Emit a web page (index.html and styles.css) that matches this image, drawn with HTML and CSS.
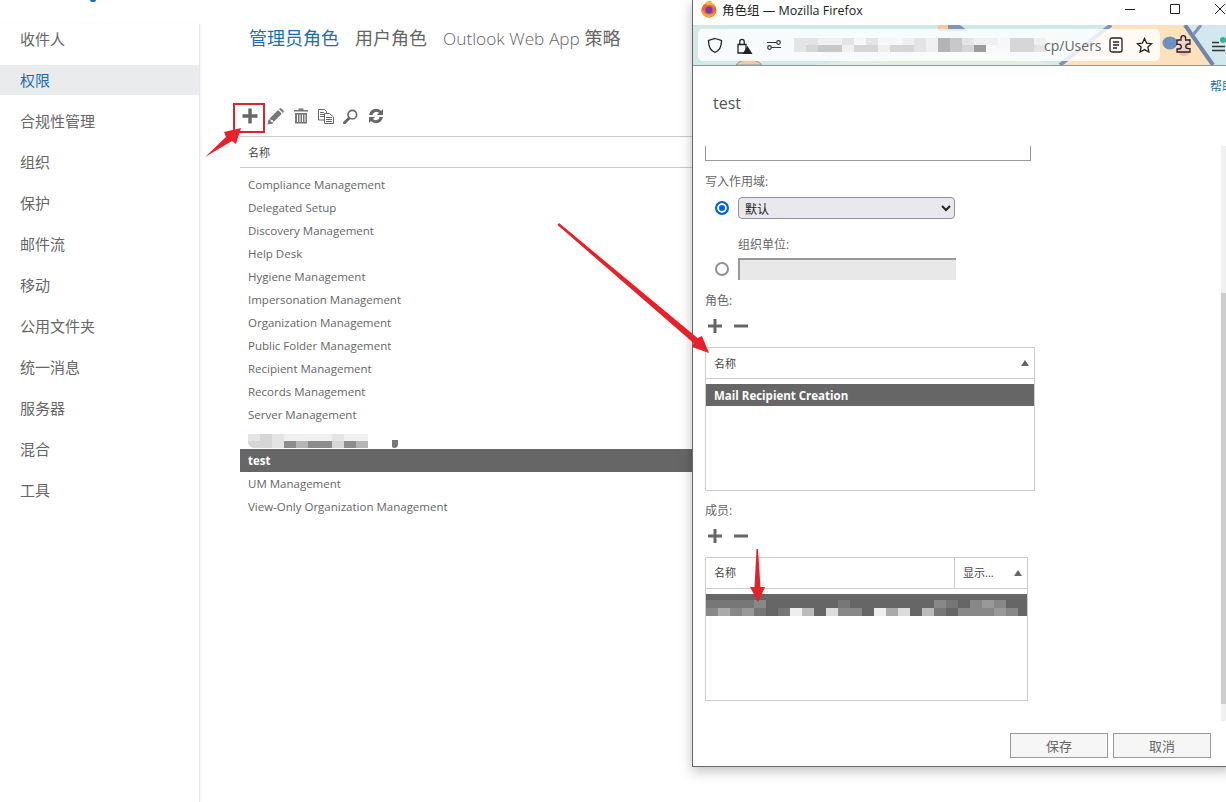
FILE: index.html
```html
<!DOCTYPE html>
<html lang="zh-CN">
<head>
  <meta charset="UTF-8">
  <title>角色组</title>
  <link rel="stylesheet" href="styles.css">
</head>
<body>
<div class="logo-tail"></div>

<div class="page">
  <nav class="sidebar">
    <a>收件人</a>
    <a class="active">权限</a>
    <a>合规性管理</a>
    <a>组织</a>
    <a>保护</a>
    <a>邮件流</a>
    <a>移动</a>
    <a>公用文件夹</a>
    <a>统一消息</a>
    <a>服务器</a>
    <a>混合</a>
    <a>工具</a>
  </nav>

  <main class="content">
    <div class="tabs">
      <span class="tab current">管理员角色</span>
      <span class="tab">用户角色</span>
      <span class="tab"><span class="tab-latin">Outlook Web App</span> 策略</span>
    </div>

    <div class="toolbar">
      <span class="tool tool-add">
        <svg width="16" height="16" viewBox="0 0 16 16"><path d="M6.300 .5h3.400v5.800h5.800v3.400H9.700v5.800H6.300V9.700H.5V6.300h5.800z" fill="#666"/></svg>
      </span>
      <span class="tool">
        <svg width="17" height="17" viewBox="0 0 17 17" fill="#777"><path d="M.5 16.500l1-5 2 .2.300 2 2 .4.200 1.300zM2.500 10.500L11 2l3.800 3.800-8.500 8.500-.3-2-2-.4z"/><path d="M12 1l1-.7c.5-.2 1-.1 1.400.2l2 2c.4.400.5 1 .2 1.500l-.7 1z"/></svg>
      </span>
      <span class="tool">
        <svg width="14" height="16" viewBox="0 0 14 16"><path d="M4.500 .5h5v1.500h4.500v1.500H0V2h4.500zM1 5h12v10.500H1zM3 6.500v7.500h1V6.500zM5.500 6.500v7.500h1V6.500zM8 6.500v7.500h1V6.500zM10.500 6.500v7.500h1V6.500z" fill="#777" fill-rule="evenodd"/></svg>
      </span>
      <span class="tool">
        <svg width="16" height="15" viewBox="0 0 16 15" fill="none" stroke="#666"><path d="M.5 .5h6l2 2v8.500h-8zM2 3.500h4M2 5.500h4M2 7.500h4"/><path d="M6.500 4.500h5l4 3.500v6.500h-9z" fill="#fff"/><path d="M8 8.500h6M8 10.500h6M8 12.500h6"/></svg>
      </span>
      <span class="tool">
        <svg width="15" height="15" viewBox="0 0 15 15" fill="none" stroke="#666"><circle cx="9.300" cy="5.700" r="4.300" stroke-width="1.600"/><path d="M6 9.200L1.500 13.700" stroke-width="2.800" stroke-linecap="round"/></svg>
      </span>
      <span class="tool">
        <svg width="16" height="16" viewBox="0 0 16 16" fill="#666"><path d="M8 .8a7 7 0 0 1 5 2.100L15 1v6H9l2-2a3.800 3.800 0 0 0-6.600 2H1.100A7 7 0 0 1 8 .8z"/><path d="M8 15.200a7 7 0 0 1-5-2.100L1 15V9h6l-2 2a3.800 3.800 0 0 0 6.600-2h3.300A7 7 0 0 1 8 15.200z"/></svg>
      </span>
    </div>

    <div class="list">
      <div class="list-head">名称</div>
      <ul class="rows">
        <li>Compliance Management</li>
        <li>Delegated Setup</li>
        <li>Discovery Management</li>
        <li>Help Desk</li>
        <li>Hygiene Management</li>
        <li>Impersonation Management</li>
        <li>Organization Management</li>
        <li>Public Folder Management</li>
        <li>Recipient Management</li>
        <li>Records Management</li>
        <li>Server Management</li>
        <li class="blurred">
          <span class="mosaic">
            <i class="k7"></i><i class="k6"></i><i class="k7"></i><i class="k8"></i><i class="k8"></i><i class="k8"></i><i class="k8"></i><i class="k7"></i><i class="k8"></i><i class="k8"></i>
            <i class="k6"></i><i class="k6"></i><i class="k7"></i><i class="k2"></i><i class="k4"></i><i class="k2"></i><i class="k2"></i><i class="k6"></i><i class="k2"></i><i class="k4"></i>
          </span>
          <span class="blob"></span>
        </li>
        <li class="selected">test</li>
        <li>UM Management</li>
        <li>View-Only Organization Management</li>
      </ul>
    </div>
  </main>
</div>

<!-- popup window sits over the page -->
<section class="ff-window">
  <header class="ff-title">
    <svg class="ff-logo" width="18" height="18" viewBox="0 0 18 18"><circle cx="9" cy="10" r="7.500" fill="#f2622e"/><path d="M5 4c1-3 5-4 7-3-1 1-1 2 0 3 2 .5 3.500 2 4 4-2-2-4-3-6-3-2 0-4 0-5-1z" fill="#fbb13c"/><circle cx="9" cy="10" r="3.500" fill="#6a3fb5"/><path d="M1.500 8c1 4 4 6.500 8 6.500 3 0 5-1.500 6.500-4-.8 4-3.800 7-7.500 7A7.500 7.500 0 0 1 1.500 8z" fill="#f8a13a"/></svg>
    <span class="ff-title-text">角色组 — Mozilla Firefox</span>
    <div class="win-btns">
      <svg width="12" height="12" viewBox="0 0 12 12"><path d="M1 6.500h10" stroke="#222"/></svg>
      <svg width="12" height="12" viewBox="0 0 12 12"><path d="M1.500 1.500h9v9h-9z" fill="none" stroke="#222"/></svg>
      <svg width="12" height="12" viewBox="0 0 12 12"><path d="M1 1l10 10M11 1L1 11" stroke="#222"/></svg>
    </div>
  </header>

  <div class="ff-toolbar">
    <!-- theme artwork behind the address bar -->
    <svg class="ff-art" width="540" height="40" viewBox="0 0 540 40">
      <path d="M0 0h540v40H0z" fill="#d3e9e6"/>
      <path d="M120 40C200 30 300 20 360 40z" fill="#e0eee0"/>
      <path d="M419 0h73l28 40H367z" fill="#fde0bd"/>
      <path d="M492 0h48v40h-20z" fill="#d2e8ee"/>
      <path d="M418 0L367 40" stroke="#7e95b5" stroke-width="4" fill="none"/>
      <path d="M492 0l28 40" stroke="#6f86a8" stroke-width="4" fill="none"/>
      <path d="M508 0l-8 10" stroke="#7e95b5" stroke-width="3" fill="none"/>
      <path d="M43 40c4-7 20-7 26 0z" fill="#f3c9a0" stroke="#8a9ab0"/>
      <path d="M245 0l22 0 8 6-30 0z" fill="#7e95b5"/>
      <path d="M245 0h10v4h-10z" fill="#f3c9a0"/>
    </svg>
    <div class="urlbar">
      <svg width="16" height="17" viewBox="0 0 16 17" fill="none" stroke="#222" stroke-width="1.300"><path d="M8 1.500l6.500 2c0 6-1.500 10-6.500 12-5-2-6.500-6-6.500-12z"/></svg>
      <svg class="lock" width="17" height="17" viewBox="0 0 17 17"><path d="M2 7.500h8v8.500H2zM3.800 7.500V4.500a2.200 2.200 0 0 1 4.400 0v3" fill="none" stroke="#222" stroke-width="1.300"/><path d="M11.500 9l5 8h-10z" fill="#222"/></svg>
      <svg class="perm" width="16" height="16" viewBox="0 0 16 16" fill="none" stroke="#333" stroke-width="1.200"><circle cx="3.500" cy="10.500" r="1.800"/><path d="M5.500 10.500h9.500M1 5.500h9"/><circle cx="12.500" cy="5.500" r="1.800"/></svg>
      <div class="url-blur">
        <i class="k7"></i><i class="k7"></i><i class="k8"></i><i class="k8"></i><i class="k7"></i><i class="k9"></i><i class="k7"></i><i class="k9"></i><i class="k9"></i><i class="k8"></i><i class="k7"></i><i class="k8"></i><i class="k4"></i><i class="k5"></i><i class="k7"></i><i class="k8"></i><i class="k8"></i><i class="k9"></i><i class="k6"></i><i class="k6"></i><i class="k8"></i>
        <i class="k7"></i><i class="k6"></i><i class="k5"></i><i class="k5"></i><i class="k8"></i><i class="k6"></i><i class="k6"></i><i class="k8"></i><i class="k6"></i><i class="k6"></i><i class="k7"></i><i class="k8"></i><i class="k4"></i><i class="k5"></i><i class="k6"></i><i class="k3"></i><i class="k9"></i><i class="k9"></i><i class="k6"></i><i class="k6"></i><i class="k7"></i>
      </div>
      <span class="url-end">cp/Users</span>
      <svg class="reader" width="14" height="16" viewBox="0 0 14 16" fill="none" stroke="#222" stroke-width="1.300"><rect x="1" y="1" width="12" height="14" rx="2"/><path d="M4 5h6M4 8h6M4 11h4"/></svg>
      <svg width="17" height="17" viewBox="0 0 17 17" fill="none" stroke="#222" stroke-width="1.300"><path d="M8.500 1.500l2.100 4.600 5 .6-3.700 3.400 1 5-4.400-2.500-4.400 2.500 1-5L1.400 6.700l5-.6z"/></svg>
    </div>
    <svg class="ff-ext" width="34" height="24" viewBox="0 0 34 24">
      <ellipse cx="9" cy="10" rx="7.500" ry="6.500" fill="#6f8fbf"/>
      <circle cx="23" cy="17" r="6" fill="#f5b8b0"/>
      <path d="M16 7h4V5a2.300 2.300 0 0 1 4.600 0v2H29v4h-2a2.300 2.300 0 0 0 0 4.600h2V19H16v-3h2a2.300 2.300 0 0 0 0-4.600h-2z" fill="#f3d0cb" stroke="#222" stroke-width="1.300"/>
    </svg>
    <svg class="ff-menu" width="17" height="16" viewBox="0 0 17 16">
      <path d="M0 5.500h7M0 9.500h13M0 13.500h13" stroke="#333" stroke-width="1.300"/>
      <circle cx="11" cy="3" r="3" fill="#2fb89a"/>
    </svg>
  </div>

  <div class="ff-body">
    <a class="help">帮助</a>
    <h3 class="dialog-name">test</h3>

    <div class="clipped-field"></div>

    <label class="fld-label scope-label">写入作用域:</label>
    <div class="scope-row">
      <span class="radio on"></span>
      <select class="scope-select"><option>默认</option></select>
    </div>
    <label class="fld-label ou-label">组织单位:</label>
    <div class="scope-row ou-row">
      <span class="radio"></span>
      <span class="ou-input"></span>
    </div>

    <label class="fld-label role-label">角色:</label>
    <div class="mini-tools">
      <svg width="16" height="16" viewBox="0 0 16 16"><path d="M6.500 1h3v5.500H15v3H9.500V15h-3V9.500H1v-3h5.500z" fill="#666"/></svg>
      <svg width="16" height="16" viewBox="0 0 16 16"><path d="M1 6.500h14v3H1z" fill="#666"/></svg>
    </div>
    <div class="grid-box roles">
      <div class="grid-head">
        <span class="cell grow">名称</span>
        <span class="sort"></span>
      </div>
      <div class="grid-row">Mail Recipient Creation</div>
    </div>

    <label class="fld-label member-label">成员:</label>
    <div class="mini-tools">
      <svg width="16" height="16" viewBox="0 0 16 16"><path d="M6.500 1h3v5.500H15v3H9.500V15h-3V9.500H1v-3h5.500z" fill="#666"/></svg>
      <svg width="16" height="16" viewBox="0 0 16 16"><path d="M1 6.500h14v3H1z" fill="#666"/></svg>
    </div>
    <div class="grid-box members">
      <div class="grid-head">
        <span class="cell grow divided">名称</span>
        <span class="cell">显示...</span>
        <span class="sort"></span>
      </div>
      <div class="grid-row mosaic-row">
        <i class="c1"></i><i class="c1"></i><i class="c1"></i><i class="c1"></i><i class="c2"></i><i></i><i></i><i></i><i></i><i></i><i></i><i class="c1"></i><i></i><i></i><i></i><i></i><i></i><i></i><i></i><i class="c2"></i><i class="c1"></i><i></i><i class="c2"></i><i class="c3"></i><i class="c2"></i><i></i>
        <i class="c2"></i><i class="c4"></i><i class="c2"></i><i class="c3"></i><i class="c1"></i><i></i><i class="c1"></i><i class="c7"></i><i class="c5"></i><i></i><i class="c6"></i><i class="c2"></i><i class="c2"></i><i></i><i class="c7"></i><i class="c4"></i><i class="c6"></i><i></i><i class="c5"></i><i class="c1"></i><i></i><i class="c2"></i><i class="c2"></i><i class="c2"></i><i class="c3"></i><i class="c2"></i>
      </div>
    </div>

    <div class="dialog-btns">
      <button>保存</button>
      <button>取消</button>
    </div>

    <div class="scrollbar"><div class="thumb"></div></div>
  </div>
</section>

<!-- red annotation arrows drawn on top of the screenshot -->
<div class="mark-box"></div>
<svg class="arrows" width="1226" height="802" viewBox="0 0 1226 802" fill="#e8202a">
  <path d="M205 157L226 137 224 132 241 128 236 144 232 141z"/>
  <path d="M559 223L697.500 338 702 336 709 353 692 347 693.500 343 557.500 225z"/>
  <path d="M756.500 549h1.500L760.500 587H765L758 602 750 587H754.500z"/>
</svg>
</body>
</html>
```

FILE: styles.css
```css
* {
  box-sizing: border-box;
}
html, body {
  height: 100%;
}
body {
  margin: 0;
  background: #fff;
  color: #555;
  font-family: "Open Sans", "Noto Sans CJK SC", sans-serif;
  font-size: 11.5px;
  overflow: hidden;
}
.page {
  display: flex;
  height: 802px;
}
.logo-tail {
  position: absolute;
  left: 90px;
  top: 0;
  width: 6px;
  height: 2px;
  background: #1a70b0;
  border-radius: 0 0 3px 3px;
}

/* left nav */
.sidebar {
  width: 200px;
  margin-top: 24px;
  border-right: 1px solid #e8e8e8;
  box-shadow: 1px 0 2px #f2f2f2;
  display: flex;
  flex-direction: column;
  gap: 11px;
}
.sidebar a {
  height: 30px;
  line-height: 30px;
  padding-left: 20px;
  font-size: 15px;
  color: #666;
}
.sidebar a.active {
  background: #e9ebed;
  color: #1a6cab;
}

/* main area */
.content {
  flex: 1;
  padding-left: 40px;
}
.tabs {
  display: flex;
  gap: 16px;
  padding: 24px 0 0 9px;
  height: 103px;
}
.tab {
  font-size: 18px;
  line-height: 28px;
  color: #666;
}
.tab.current {
  color: #1a70b0;
}
.tab-latin {
  font-size: 17.300px;
  font-weight: 300;
}
.toolbar {
  display: flex;
  align-items: center;
  height: 33px;
  padding: 0 0 7px 1px;
  gap: 8px;
}
.tool {
  display: flex;
  align-items: center;
  justify-content: center;
  width: 17px;
  height: 26px;
}
.tool-add {
  width: 18px;
}
.list {
  border-top: 1px solid #ccc;
}
.list-head {
  height: 31px;
  line-height: 31px;
  padding-left: 8px;
  border-bottom: 1px solid #ccc;
  font-size: 11px;
  color: #444;
}
.rows {
  list-style: none;
  margin: 5px 0 0;
  padding: 0;
}
.rows li {
  height: 23px;
  line-height: 23px;
  padding-left: 8px;
  color: #666;
  white-space: nowrap;
}
.rows li.selected {
  background: #666;
  color: #fff;
  font-weight: 700;
}
.rows li.blurred {
  display: flex;
  align-items: flex-end;
  height: 23px;
  padding-bottom: 1px;
  overflow: hidden;
}
.mosaic {
  display: grid;
  grid-template-columns: repeat(10, 12px);
  grid-auto-rows: 7px;
  border-radius: 0 0 0 6px;
  overflow: hidden;
}
.blob {
  width: 6px;
  height: 8px;
  margin-left: 24px;
  background: #777;
  border-radius: 0 0 4px 2px;
}
.k2 { background: #8c8c8c; }
.k3 { background: #9c9c9c; }
.k4 { background: #b4b4b4; }
.k5 { background: #c8c8c8; }
.k6 { background: #d6d6d6; }
.k7 { background: #e4e4e4; }
.k8 { background: #f0f0f0; }
.k9 { background: #f7f7f7; }

/* firefox popup */
.ff-window {
  position: absolute;
  left: 692px;
  top: 0;
  width: 540px;
  height: 767px;
  background: #fff;
  border-left: 1px solid #666;
  border-bottom: 1px solid #666;
  box-shadow: 0 4px 12px rgba(0, 0, 0, 0.25);
  display: flex;
  flex-direction: column;
}
.ff-title {
  display: flex;
  align-items: center;
  height: 25px;
  padding: 0 0 7px 7px;
  color: #222;
  font-size: 12.500px;
}
.ff-title-text {
  margin-left: 4px;
}
.win-btns {
  margin-left: auto;
  display: flex;
  gap: 33px;
  padding-right: 6px;
}
.ff-toolbar {
  position: relative;
  display: flex;
  align-items: center;
  height: 41px;
  padding-left: 5px;
  border-bottom: 1px solid #8a9aa0;
}
.ff-art {
  position: absolute;
  left: 0;
  top: 0;
}
.urlbar {
  position: relative;
  display: flex;
  align-items: center;
  width: 462px;
  height: 32px;
  padding: 0 0 0 9px;
  background: rgba(255, 255, 255, 0.82);
  border-radius: 5px;
  gap: 13px;
}
.url-blur {
  display: grid;
  grid-template-columns: repeat(21, 12px);
  grid-auto-rows: 7px;
  margin-left: -1px;
  width: 252px;
}
.url-end {
  color: #666;
  font-size: 14px;
  width: 60px;
  margin-left: -15px;
  white-space: nowrap;
}
.reader {
  margin-left: -8px;
}
.ff-ext {
  position: relative;
  margin-left: 1px;
}
.ff-menu {
  position: relative;
  margin-left: 17px;
}

/* dialog inside the popup */
.ff-body {
  position: relative;
  flex: 1;
  padding-left: 12px;
}
.help {
  position: absolute;
  left: 517px;
  top: 11px;
  color: #1a70b0;
  font-size: 12px;
  white-space: nowrap;
}
.dialog-name {
  margin: 0;
  padding: 25px 0 0 8px;
  height: 80px;
  font-size: 16px;
  font-weight: 400;
  line-height: 24px;
  color: #555;
}
.clipped-field {
  width: 326px;
  height: 15px;
  border: 1px solid #999;
  border-top: 0;
}
.fld-label {
  display: block;
  height: 18px;
  line-height: 18px;
  font-size: 12px;
  color: #666;
}
.scope-label {
  margin-top: 12px;
}
.scope-row {
  display: flex;
  align-items: center;
  gap: 9px;
  height: 22px;
  margin-top: 6px;
  padding-left: 10px;
}
.radio {
  width: 14px;
  height: 14px;
  border: 2px solid #8f8f9d;
  border-radius: 50%;
  background: #fff;
}
.radio.on {
  border-color: #0060df;
  box-shadow: inset 0 0 0 2px #fff;
  background: #0060df;
}
.scope-select {
  width: 217px;
  height: 22px;
  padding-left: 2px;
  border: 1px solid #8f8f9d;
  border-radius: 4px;
  background: #e9e9ed;
  color: #222;
  font-family: "Noto Sans CJK SC", sans-serif;
  font-size: 12px;
}
.ou-label {
  margin-top: 17px;
  padding-left: 33px;
}
.ou-row {
  margin-top: 4px;
}
.ou-input {
  width: 218px;
  height: 22px;
  background: #e8e8e8;
  border-top: 2px solid #999;
  border-left: 2px solid #999;
}
.role-label {
  margin-top: 12px;
}
.mini-tools {
  display: flex;
  gap: 10px;
  height: 16px;
  margin-top: 8px;
  padding-left: 2px;
}
.grid-box {
  margin-top: 13px;
  border: 1px solid #ccc;
  height: 144px;
}
.roles {
  width: 330px;
}
.members {
  width: 323px;
}
.member-label {
  margin-top: 11px;
}
.grid-head {
  display: flex;
  align-items: center;
  height: 31px;
  border-bottom: 1px solid #ccc;
  color: #444;
  font-size: 11px;
}
.cell {
  padding-left: 8px;
  line-height: 30px;
}
.roles .cell {
  line-height: 31px;
}
.grow {
  flex: 1;
}
.divided {
  border-right: 1px solid #ccc;
}
.members .cell:not(.grow) {
  width: 59px;
}
.sort {
  width: 0;
  height: 0;
  margin-right: 5px;
  border: 4px solid transparent;
  border-top: 0;
  border-bottom: 6px solid #666;
}
.grid-row {
  height: 22px;
  line-height: 23px;
  margin-top: 5px;
  padding-left: 8px;
  background: #666;
  color: #fff;
  font-weight: 700;
}
.mosaic-row {
  display: grid;
  grid-template-columns: repeat(26, 12px);
  grid-auto-rows: 8px;
  padding: 6px 0 0;
}
.c1 { background: #777; }
.c2 { background: #888; }
.c3 { background: #999; }
.c4 { background: #aaa; }
.c5 { background: #bbb; }
.c6 { background: #ddd; }
.c7 { background: #eee; }
.dialog-btns {
  position: absolute;
  left: 317px;
  top: 667px;
  display: flex;
  gap: 5px;
}
.dialog-btns button {
  width: 98px;
  height: 25px;
  padding: 0;
  border: 1px solid #999;
  background: #f6f6f6;
  color: #666;
  font-family: "Noto Sans CJK SC", sans-serif;
  font-size: 13px;
}
.scrollbar {
  position: absolute;
  left: 528px;
  top: 80px;
  width: 6px;
  height: 575px;
  background: #f0f0f0;
}
.thumb {
  margin-top: 147px;
  height: 411px;
  background: #cdcdcd;
}

/* annotations */
.mark-box {
  position: absolute;
  left: 233px;
  top: 103px;
  width: 32px;
  height: 30px;
  border: 2px solid #d7262e;
}
.arrows {
  position: absolute;
  left: 0;
  top: 0;
  pointer-events: none;
}
```
